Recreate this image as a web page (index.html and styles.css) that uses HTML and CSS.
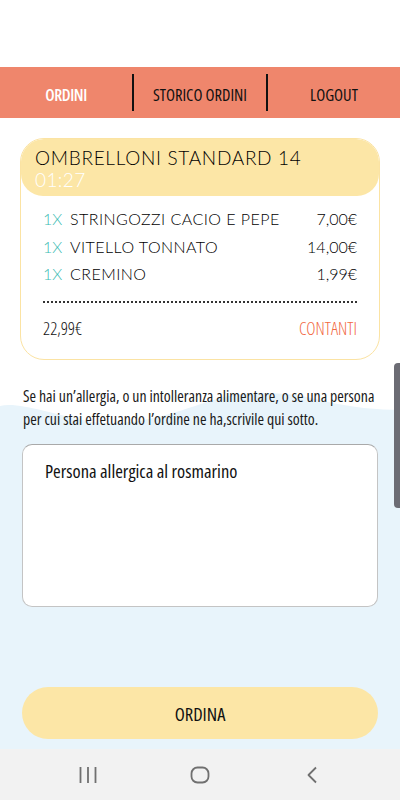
FILE: index.html
```html
<!DOCTYPE html>
<html lang="it">
  <head>
    <meta charset="UTF-8" />
    <meta name="viewport" content="width=device-width, initial-scale=1.0" />
    <title>Ordini</title>
    <link rel="stylesheet" href="styles.css">
  </head>
  <body>
    <div class="status-space"></div>

    <!-- Top menu -->
    <nav class="menu">
      <a class="menu-item active" href="#">ORDINI</a>
      <a class="menu-item" href="#">STORICO ORDINI</a>
      <a class="menu-item" href="#">LOGOUT</a>
    </nav>

    <main class="content">
      <svg class="wave" viewBox="0 0 400 640" preserveAspectRatio="none" aria-hidden="true">
        <path d="M0 292 C 20 288, 50 300, 90 308 C 140 315, 180 296, 220 284 C 250 276, 290 278, 320 286 C 350 294, 380 296, 400 296 L 400 640 L 0 640 Z" fill="#e8f4fb" />
      </svg>

      <!-- Order card -->
      <section class="order-card">
        <div class="order-head">
          <div class="order-title">OMBRELLONI STANDARD 14</div>
          <div class="order-time">01:27</div>
        </div>
        <ul class="order-items">
          <li><span class="qty">1X</span><span class="name">STRINGOZZI CACIO E PEPE</span><span class="price">7,00€</span></li>
          <li><span class="qty">1X</span><span class="name">VITELLO TONNATO</span><span class="price">14,00€</span></li>
          <li><span class="qty">1X</span><span class="name">CREMINO</span><span class="price">1,99€</span></li>
        </ul>
        <div class="order-foot">
          <span class="total">22,99€</span>
          <span class="payment">CONTANTI</span>
        </div>
      </section>

      <p class="note">Se hai un’allergia, o un intolleranza alimentare, o se una persona per cui stai effetuando l’ordine ne ha,scrivile qui sotto.</p>

      <textarea class="allergy">Persona allergica al rosmarino</textarea>

      <button class="order-btn">ORDINA</button>

      <div class="edge-handle"></div>
    </main>

    <!-- Android navigation bar -->
    <footer class="sys-nav">
      <svg width="20" height="18" viewBox="0 0 20 18"><path d="M2.5 1v16M10 1v16M17.5 1v16" stroke="#707070" stroke-width="1.8" /></svg>
      <svg width="20" height="18" viewBox="0 0 20 18"><rect x="1.5" y="1.5" width="17" height="15" rx="6" fill="none" stroke="#707070" stroke-width="1.8" /></svg>
      <svg width="20" height="18" viewBox="0 0 20 18"><path d="M14 1.5L6.5 9l7.5 7.5" fill="none" stroke="#707070" stroke-width="1.8" stroke-linejoin="round" /></svg>
    </footer>
  </body>
</html>
```

FILE: styles.css
```css
/* Global Styles */
body {
  margin: 0;
  width: 400px;
  height: 800px;
  display: flex;
  flex-direction: column;
  background-color: #fff;
  font-family: "Open Sans", sans-serif;
  font-stretch: 75%;
  color: #111;
  overflow: hidden;
}

.status-space {
  height: 67px;
}

/* Top menu */
.menu {
  height: 51px;
  display: flex;
  align-items: center;
  background-color: #ef866c;
}

.menu-item {
  flex: 1;
  height: 37px;
  display: flex;
  align-items: center;
  justify-content: center;
  padding-top: 3px;
  box-sizing: border-box;
  color: #111;
  text-decoration: none;
  font-size: 16.5px;
  font-weight: 500;
}

.menu-item + .menu-item {
  border-left: 2px solid #111;
}

.menu-item.active {
  color: #fff;
  font-weight: 600;
  letter-spacing: -0.4px;
}

/* Main area */
.content {
  position: relative;
  flex: 1;
  display: flex;
  flex-direction: column;
  padding: 20px 22px 10px;
  z-index: 0;
}

.wave {
  position: absolute;
  left: 0;
  top: 0;
  width: 100%;
  height: 100%;
  z-index: -1;
}

/* Order card */
.order-card {
  margin: 0 -2px;
  border: 1px solid #fbe3a3;
  border-radius: 24px;
  background-color: #fff;
  overflow: hidden;
}

.order-head {
  height: 57px;
  padding: 8px 14px 0;
  box-sizing: border-box;
  background-color: #fce6a6;
  border-radius: 22px;
  font-family: "Lato", sans-serif;
  font-stretch: normal;
  font-weight: 300;
}

.order-title {
  font-size: 19px;
  line-height: 22px;
  color: #000;
  letter-spacing: 0.7px;
}

.order-time {
  font-size: 19px;
  line-height: 22px;
  color: #fff;
  letter-spacing: 0.4px;
}

.order-items {
  list-style: none;
  margin: 0;
  padding: 9px 22px 0;
  font-family: "Lato", sans-serif;
  font-stretch: normal;
  font-weight: 300;
  font-size: 16px;
  color: #000;
}

.order-items li {
  display: flex;
  height: 27.5px;
  align-items: center;
}

.qty {
  color: #3bbcb3;
  width: 27px;
}

.name {
  flex: 1;
  letter-spacing: 0.45px;
}

.order-foot {
  margin: 13px 22px 0;
  padding: 13px 0 19px;
  border-top: 2px dotted #333;
  display: flex;
  justify-content: space-between;
  font-size: 17.5px;
  font-weight: 320;
}

.total {
  color: #111;
}

.payment {
  color: #f2683f;
}

/* Allergy note */
.note {
  margin: 25px 1px 13px;
  font-size: 15.8px;
  line-height: 23px;
  color: #1a1a1a;
}

.allergy {
  height: 163px;
  box-sizing: border-box;
  padding: 13px 22px;
  border: 1px solid #c4c4c4;
  border-top-color: #a9a9a9;
  border-radius: 10px;
  font-family: "Open Sans", sans-serif;
  font-stretch: 75%;
  font-size: 18.5px;
  color: #111;
  resize: none;
  background-color: #fff;
}

.order-btn {
  margin-top: auto;
  height: 52px;
  border: none;
  border-radius: 26px;
  background-color: #fce6a6;
  font-family: "Open Sans", sans-serif;
  font-stretch: 75%;
  font-size: 18.5px;
  font-weight: 500;
  color: #111;
}

/* Edge panel handle */
.edge-handle {
  position: absolute;
  right: 0;
  top: 245px;
  width: 6px;
  height: 145px;
  border-radius: 4px 0 0 4px;
  background-color: #6c6c74;
}

/* System navigation */
.sys-nav {
  height: 51px;
  display: flex;
  justify-content: center;
  align-items: center;
  gap: 92px;
  background-color: #f2f2f2;
}
```
